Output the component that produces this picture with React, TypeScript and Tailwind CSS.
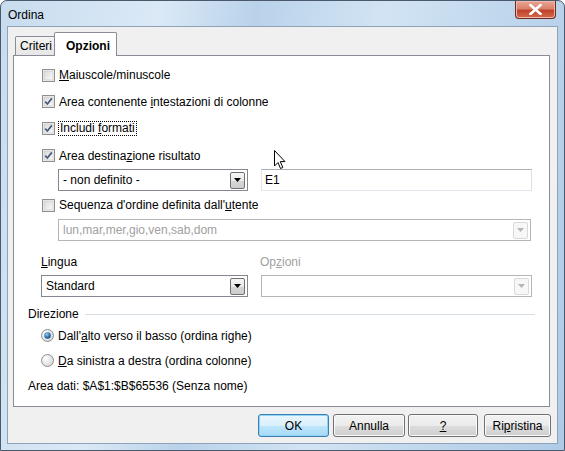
import React from 'react';

const font = { fontFamily: '"Liberation Sans", Arial, sans-serif' };

function CheckBox({ checked }: { checked: boolean }) {
  return (
    <svg width="13" height="13" viewBox="0 0 13 13" className="shrink-0">
      <defs>
        <linearGradient id="cbg" x1="0" y1="0" x2="1" y2="1">
          <stop offset="0" stopColor="#d9d9d9" />
          <stop offset="1" stopColor="#fbfbfb" />
        </linearGradient>
      </defs>
      <rect x="0.5" y="0.5" width="12" height="12" fill="#f4f4f4" stroke="#8e8f8f" />
      <rect x="2" y="2" width="9" height="9" fill="url(#cbg)" stroke="#c3c3c3" strokeWidth="0.6" />
      {checked && (
        <path d="M3.2 6.6 L5.4 9 L9.8 3.4" fill="none" stroke="#4a5a7a" strokeWidth="1.7" />
      )}
    </svg>
  );
}

function Radio({ checked }: { checked: boolean }) {
  return (
    <svg width="13" height="13" viewBox="0 0 13 13" className="shrink-0">
      <defs>
        <radialGradient id="rbg" cx="0.35" cy="0.35" r="0.8">
          <stop offset="0" stopColor="#ffffff" />
          <stop offset="1" stopColor="#d2d2d2" />
        </radialGradient>
        <radialGradient id="rdot" cx="0.4" cy="0.35" r="0.7">
          <stop offset="0" stopColor="#9fd3f7" />
          <stop offset="0.6" stopColor="#2d72b4" />
          <stop offset="1" stopColor="#173f6e" />
        </radialGradient>
      </defs>
      <circle cx="6.5" cy="6.5" r="6" fill="url(#rbg)" stroke="#8e8f8f" />
      {checked && <circle cx="6.5" cy="6.5" r="3.2" fill="url(#rdot)" />}
    </svg>
  );
}

function Arrow({ disabled }: { disabled?: boolean }) {
  return (
    <div
      className={
        disabled
          ? 'w-[15px] h-[17px] mr-[2px] flex items-center justify-center border border-[#d9d9d9] rounded-[2px] bg-[#f7f7f7]'
          : 'w-[15px] h-[17px] mr-[2px] flex items-center justify-center border border-[#707070] rounded-[2px] bg-[linear-gradient(180deg,#f6f6f6_0%,#e9e9e9_50%,#d6d6d6_51%,#cdcdcd_100%)]'
      }
    >
      <svg width="7" height="4" viewBox="0 0 7 4">
        <path d="M0 0 H7 L3.5 4 Z" fill={disabled ? '#b6b6b6' : '#000'} />
      </svg>
    </div>
  );
}

function Combo({ text, width, disabled }: { text: string; width: number; disabled?: boolean }) {
  return (
    <div
      className={`h-[22px] flex items-center justify-between bg-white border ${
        disabled ? 'border-[#b5b5b5]' : 'border-[#828790]'
      }`}
      style={{ width }}
    >
      <span className={`pl-[4px] text-[12px] ${disabled ? 'text-[#a0a0a0]' : 'text-black'}`}>{text}</span>
      <Arrow disabled={disabled} />
    </div>
  );
}

function Btn({ children, width, def }: { children: React.ReactNode; width: number; def?: boolean }) {
  return (
    <div
      className={`h-[23px] rounded-[3px] border flex items-center justify-center text-[12px] text-black ${
        def
          ? 'border-[#3c7fb1] shadow-[inset_0_0_0_1px_#8fd4f6] bg-[linear-gradient(180deg,#eaf6fd_0%,#d9f0fc_50%,#bee6fd_51%,#a7d9f5_100%)]'
          : 'border-[#707070] shadow-[inset_0_0_0_1px_#fbfbfb] bg-[linear-gradient(180deg,#f2f2f2_0%,#ebebeb_50%,#dddddd_51%,#cfcfcf_100%)]'
      }`}
      style={{ width }}
    >
      {children}
    </div>
  );
}

export default function App() {
  return (
    <div className="w-[565px] h-[451px] relative overflow-hidden" style={font}>
      <div className="w-full h-full flex flex-col rounded-t-[7px] border border-[#4a5a6c] bg-[linear-gradient(100deg,#c8dcef_0%,#dbe9f6_25%,#b9d2ea_40%,#d2e4f4_60%,#bfd6ec_80%,#aecbe6_100%)]">
        {/* Title bar */}
        <div className="h-[25px] flex items-center justify-between shrink-0">
          <span className="pl-[7px] pt-[2px] text-[12px] text-black">Ordina</span>
          <div className="self-start mr-[8px] w-[41px] h-[18px] rounded-b-[4px] border border-[#6b2b20] border-t-0 flex items-center justify-center bg-[linear-gradient(180deg,#e8a696_0%,#d9826d_45%,#c2432b_55%,#d36a4d_100%)] shadow-[inset_0_0_0_1px_#f0b8a8]">
            <svg width="13" height="11" viewBox="0 0 13 11">
              <path d="M1.5 1 L11.5 10 M11.5 1 L1.5 10" stroke="#ffffff" strokeWidth="2.6" strokeLinecap="square" />
            </svg>
          </div>
        </div>

        {/* Client area */}
        <div className="mx-[6px] mb-[6px] flex-1 border border-[#8ea2b8] bg-[#f0f0f0] flex flex-col">
          <div className="pt-[5px] pl-[5px] pr-[7px]">
            {/* Tabs */}
            <div className="h-[23px] flex items-end pl-[2px]">
              <div className="w-[41px] h-[19px] border border-b-0 border-[#898c95] rounded-t-[2px] bg-[linear-gradient(180deg,#f4f4f4_0%,#e6e6e6_100%)] flex items-center pl-[4px] text-[12px] text-black">
                Criteri
              </div>
              <div className="relative z-10 -ml-[2px] -mb-px w-[63px] h-[24px] border border-b-0 border-[#898c95] rounded-t-[2px] bg-white flex items-start pt-[4px] pl-[11px] text-[12px] font-bold text-black">
                Opzioni
              </div>
            </div>

            {/* Panel */}
            <div className="h-[352px] border border-[#898c95] bg-white flex flex-col text-[12px] text-black">
              <div className="pt-[6px] pl-[28px]">
                <div className="h-[26px] flex items-center gap-[4px]">
                  <CheckBox checked={false} />
                  <span>
                    <u>M</u>aiuscole/minuscole
                  </span>
                </div>
                <div className="h-[27px] flex items-center gap-[4px]">
                  <CheckBox checked />
                  <span>
                    Area contenente <u>i</u>ntestazioni di colonne
                  </span>
                </div>
                <div className="h-[27px] flex items-center gap-[3px]">
                  <CheckBox checked />
                  <span className="border border-dotted border-black px-px leading-[13px]">
                    Includi <u>f</u>ormati
                  </span>
                </div>
                <div className="h-[27px] flex items-center gap-[4px]">
                  <CheckBox checked />
                  <span>
                    Area destina<u>z</u>ione risultato
                  </span>
                </div>
              </div>

              <div className="h-[22px] flex pl-[44px] gap-[13px]">
                <Combo text="- non definito -" width={190} />
                <div className="w-[271px] h-[22px] bg-white border border-[#abadb3] border-l-[#e2e3ea] border-r-[#dbdfe6] border-b-[#e3e9ef] flex items-center pl-[3px] shadow-[inset_0_0_0_1px_#ffffff]">
                  E1
                </div>
              </div>

              <div className="h-[28px] flex items-center gap-[4px] pl-[28px]">
                <CheckBox checked={false} />
                <span>
                  Sequenza d'ordine definita dall'<u>u</u>tente
                </span>
              </div>

              <div className="pl-[44px]">
                <Combo text="lun,mar,mer,gio,ven,sab,dom" width={473} disabled />
              </div>

              <div className="h-[34px] flex items-start pt-[12px]">
                <span className="pl-[27px] w-[246px]">
                  <u>L</u>ingua
                </span>
                <span className="text-[#a0a0a0]">
                  Op<u>z</u>ioni
                </span>
              </div>

              <div className="h-[22px] flex pl-[27px] gap-[13px]">
                <Combo text="Standard" width={207} />
                <Combo text="" width={271} disabled />
              </div>

              <div className="mt-[8px] h-[18px] flex items-center pl-[14px] pr-[14px] gap-[6px]">
                <span>Direzione</span>
                <div className="flex-1 h-px bg-[#d5dfe5]" />
              </div>

              <div className="pl-[27px]">
                <div className="h-[25px] flex items-center gap-[4px]">
                  <Radio checked />
                  <span>
                    Dall'<u>a</u>lto verso il basso (ordina righe)
                  </span>
                </div>
                <div className="h-[25px] flex items-center gap-[4px]">
                  <Radio checked={false} />
                  <span>
                    <u>D</u>a sinistra a destra (ordina colonne)
                  </span>
                </div>
              </div>

              <div className="h-[25px] flex items-center pl-[14px]">Area dati: $A$1:$B$65536 (Senza nome)</div>
            </div>
          </div>

          {/* Buttons */}
          <div className="mt-[7px] pr-[6px] flex justify-end">
            <Btn width={71} def>
              OK
            </Btn>
            <div className="w-[4px]" />
            <Btn width={72}>Annulla</Btn>
            <div className="w-[3px]" />
            <Btn width={70}>
              <u>?</u>
            </Btn>
            <div className="w-[6px]" />
            <Btn width={67}>
              Ri<u>p</u>ristina
            </Btn>
          </div>
        </div>
      </div>

      {/* Mouse cursor */}
      <svg className="absolute left-[274px] top-[150px]" width="12" height="20" viewBox="0 0 12 20">
        <path
          d="M0.5 0.5 L0.5 16 L4 12.5 L6.5 18.5 L8.8 17.5 L6.3 11.6 L11 11.6 Z"
          fill="#ffffff"
          stroke="#000000"
          strokeWidth="1"
          strokeLinejoin="miter"
        />
      </svg>
    </div>
  );
}
